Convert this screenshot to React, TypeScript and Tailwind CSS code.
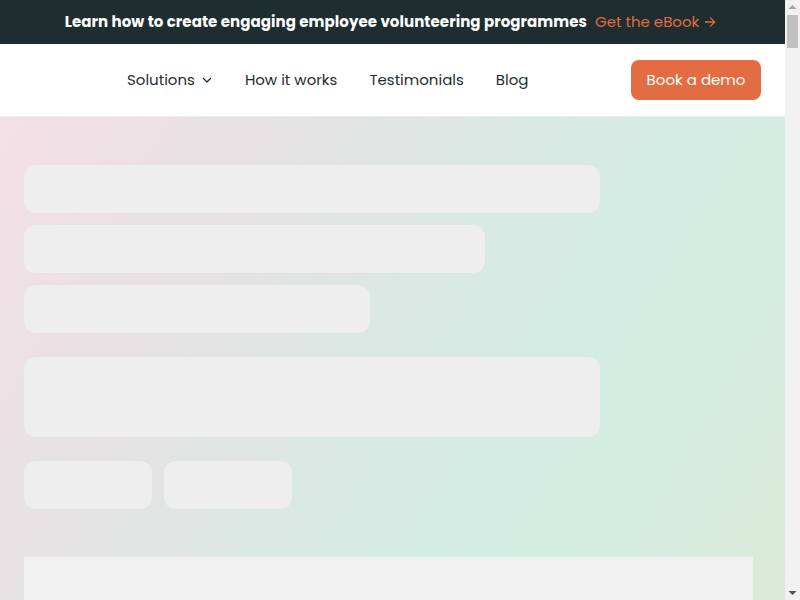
import React from "react";

const font = { fontFamily: "Poppins, Inter, 'Open Sans', sans-serif" };

function Chevron() {
  return (
    <svg width="12" height="12" viewBox="0 0 24 24" fill="none" stroke="currentColor" strokeWidth="2.5" strokeLinecap="round" strokeLinejoin="round">
      <path d="M5 9l7 7 7-7" />
    </svg>
  );
}

function Arrow() {
  return (
    <svg width="14" height="14" viewBox="0 0 24 24" fill="none" stroke="currentColor" strokeWidth="2.2" strokeLinecap="round" strokeLinejoin="round">
      <path d="M4 12h15M13 5l7 7-7 7" />
    </svg>
  );
}

function Scrollbar() {
  return (
    <div className="fixed right-0 top-0 flex h-[600px] w-[15px] flex-col items-center bg-[#f1f1f1]">
      <svg width="15" height="14" viewBox="0 0 15 14" className="shrink-0">
        <path d="M3.5 9 L7.5 5 L11.5 9 Z" fill="#a3a3a3" />
      </svg>
      <div className="mt-px h-[33px] w-[11px] bg-[#c1c1c1]" />
      <div className="flex-1" />
      <svg width="15" height="14" viewBox="0 0 15 14" className="shrink-0">
        <path d="M3.5 5 L7.5 9 L11.5 5 Z" fill="#505050" />
      </svg>
    </div>
  );
}

export default function App() {
  return (
    <div className="relative w-full bg-white" style={font}>
      <div className="w-[785px]">
        <div className="flex h-[44px] items-center justify-center bg-[#1e2d30] text-[15px]">
          <span className="-ml-[3px] font-bold tracking-[0.08px] text-white">Learn how to create engaging employee volunteering programmes</span>
          <span className="ml-2 flex items-center gap-1 text-[#e56b3e]">
            Get the eBook <Arrow />
          </span>
        </div>
        <nav className="flex h-[73px] items-center border-b border-[#ececec] px-6">
          <div className="w-[103px]" />
          <div className="flex items-center gap-8 text-[15px] text-[#1e2d30]">
            <span className="flex items-center gap-1.5">
              Solutions <Chevron />
            </span>
            <span>How it works</span>
            <span>Testimonials</span>
            <span>Blog</span>
          </div>
          <div className="flex-1" />
          <button className="h-10 w-[130px] rounded-lg bg-[#e46c42] text-[15px] text-white">Book a demo</button>
        </nav>
        <section className="bg-[linear-gradient(120deg,#f4dfe6_0%,#e3e3e3_30%,#d2ede4_62%,#d4ece1_75%,#dfead6_100%)] px-6 pb-12 pt-12">
          <div className="flex flex-col gap-3">
            <div className="h-12 w-[576px] rounded-xl bg-[#eeeeee]" />
            <div className="h-12 w-[461px] rounded-xl bg-[#eeeeee]" />
            <div className="h-12 w-[346px] rounded-xl bg-[#eeeeee]" />
          </div>
          <div className="mt-6 h-20 w-[576px] rounded-xl bg-[#eeeeee]" />
          <div className="mt-6 flex gap-3">
            <div className="h-12 w-32 rounded-xl bg-[#eeeeee]" />
            <div className="h-12 w-32 rounded-xl bg-[#eeeeee]" />
          </div>
          <div className="mt-12 h-[120px] w-[729px] bg-[#f0f0f0]" />
        </section>
      </div>
      <Scrollbar />
    </div>
  );
}
